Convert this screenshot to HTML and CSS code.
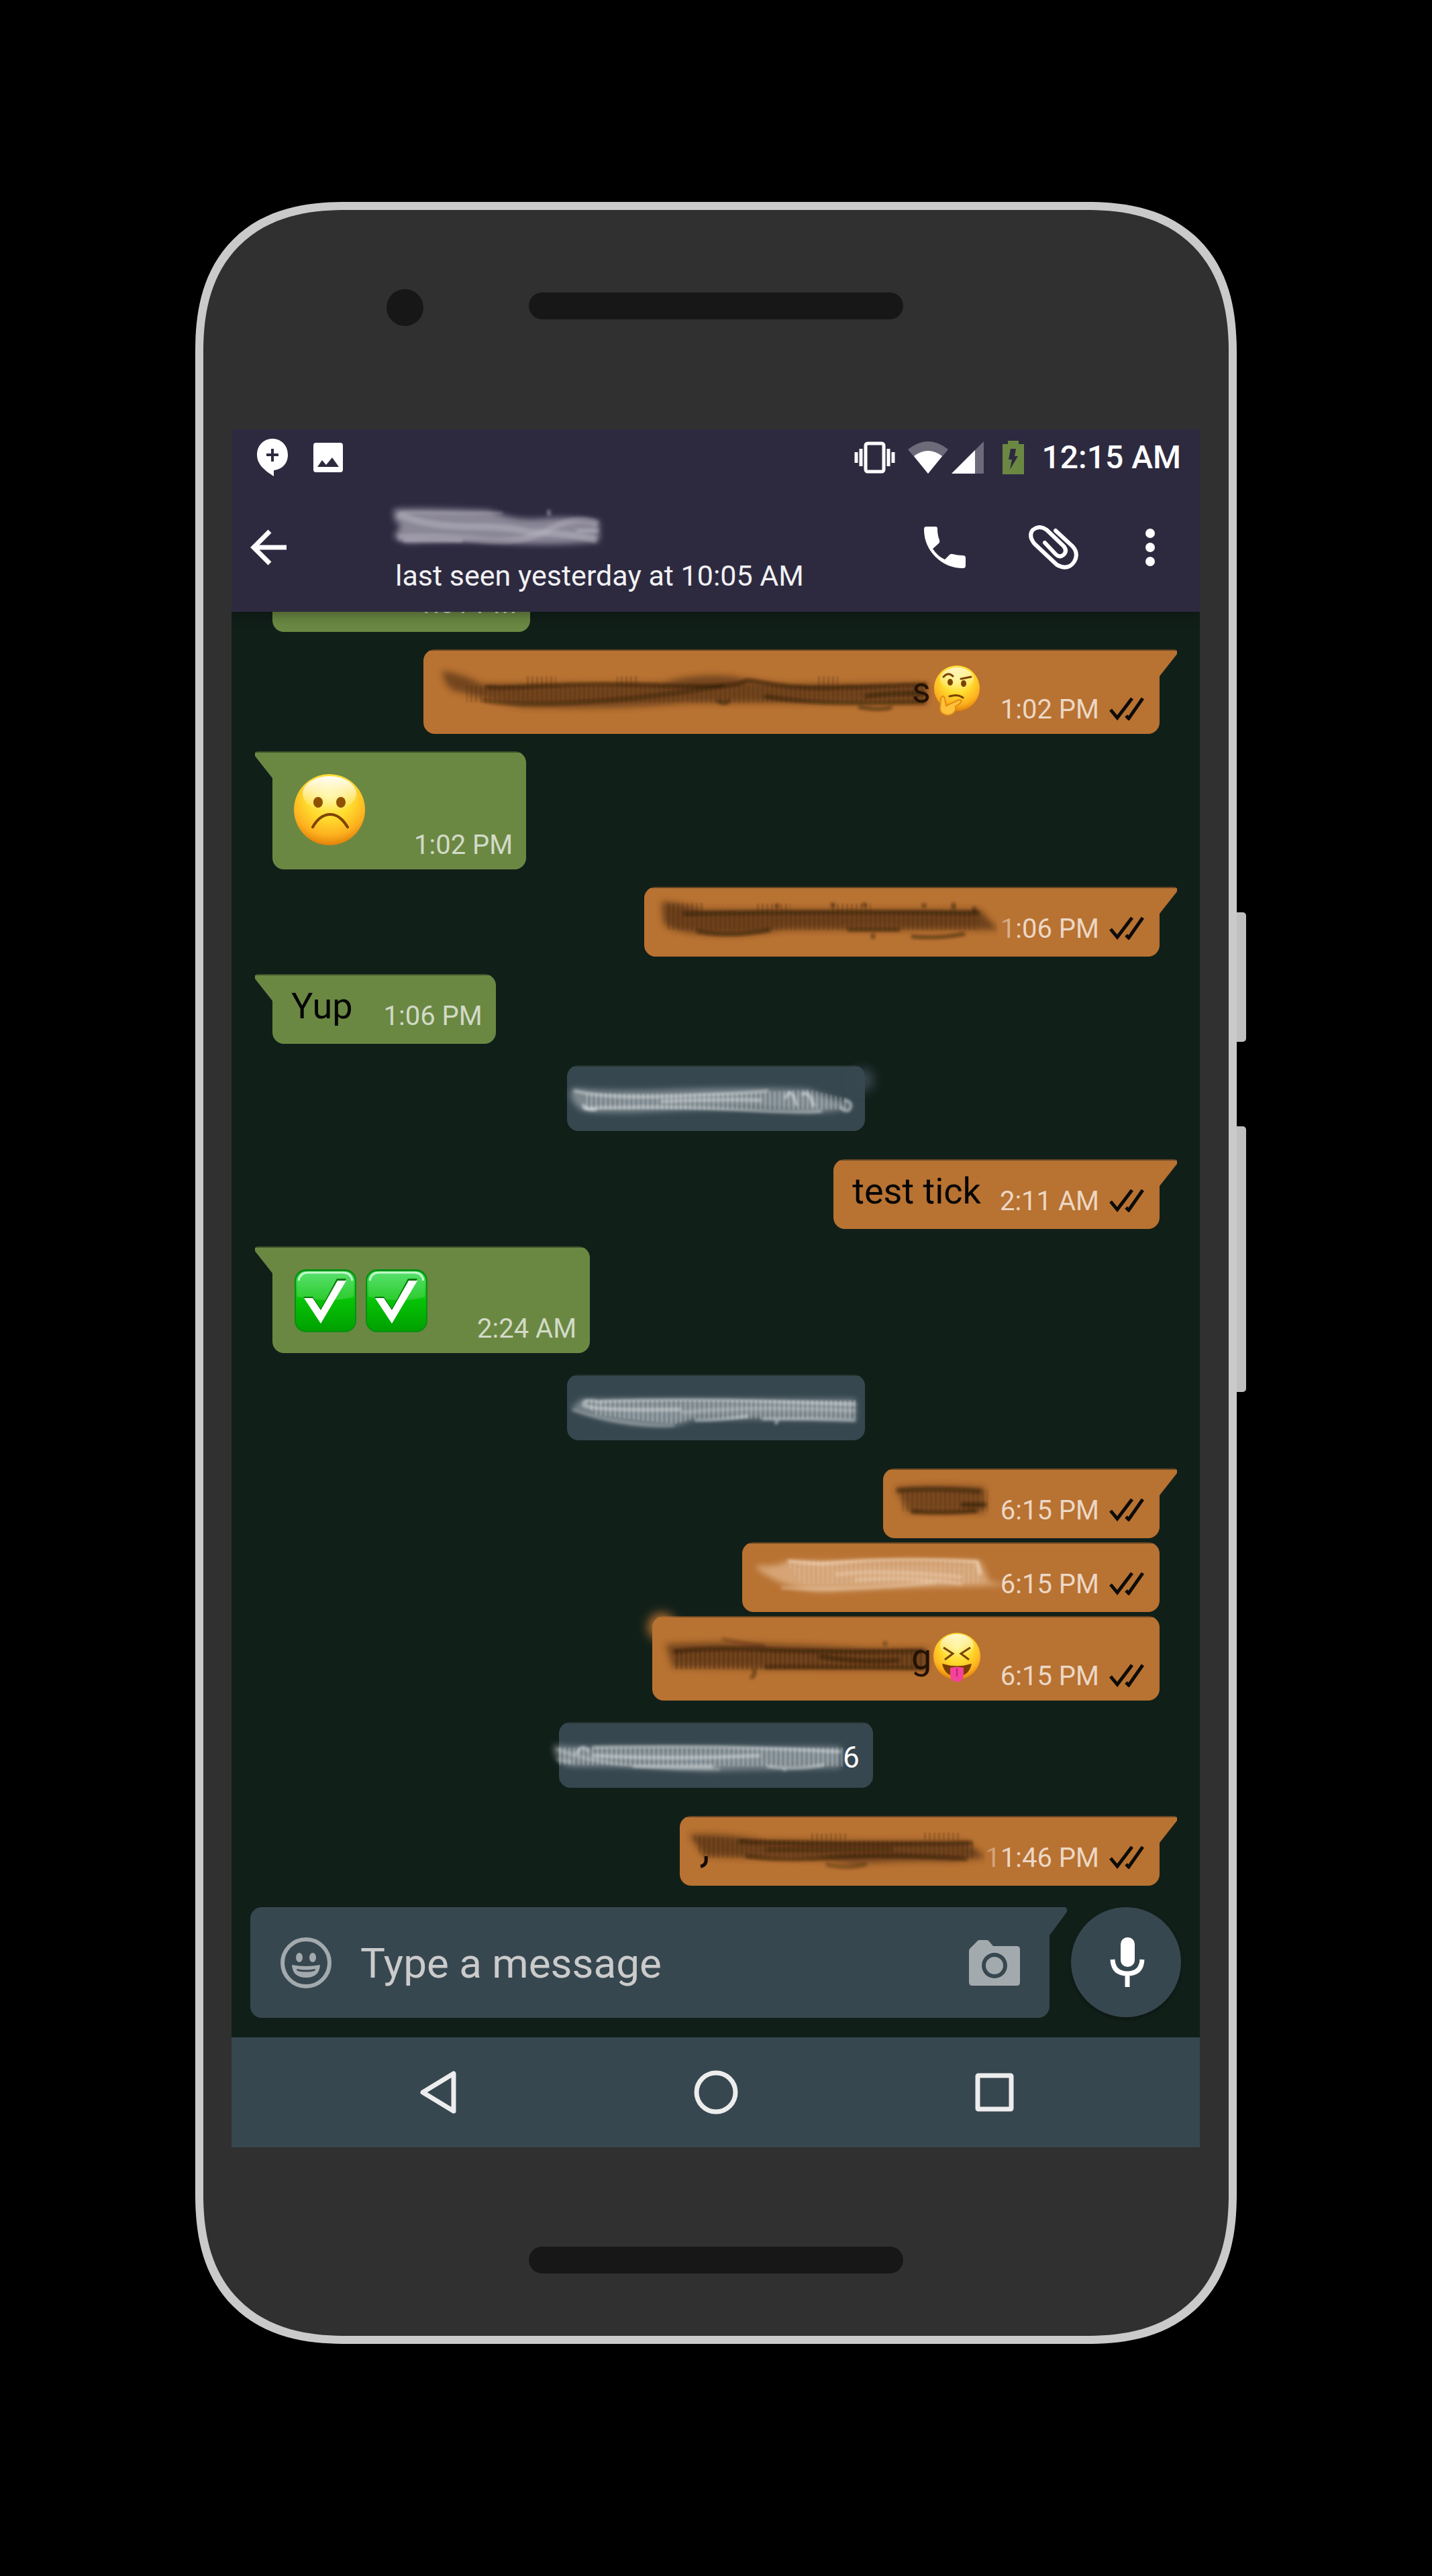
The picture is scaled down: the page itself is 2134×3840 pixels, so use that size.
FILE: index.html
```html
<!DOCTYPE html>
<html lang="en">
<head>
<meta charset="utf-8">
<meta name="viewport" content="width=device-width, initial-scale=1">
<title>Chat</title>
<link rel="stylesheet" href="styles.css">
</head>
<body>
<svg class="defs" aria-hidden="true">
  <defs>
    <filter id="soft" x="-20%" y="-60%" width="140%" height="220%"><feGaussianBlur stdDeviation="5"/></filter>
    <filter id="fine" x="-20%" y="-60%" width="140%" height="220%"><feGaussianBlur stdDeviation="2"/></filter>
    <filter id="glow" x="-100%" y="-100%" width="300%" height="300%"><feGaussianBlur stdDeviation="8"/></filter>
    <pattern id="comb-dark" width="7" height="80" patternUnits="userSpaceOnUse"><rect width="3" height="80" fill="#3b220c"/></pattern>
    <pattern id="comb-light" width="7" height="110" patternUnits="userSpaceOnUse"><rect width="3" height="110" fill="#e6eaec"/></pattern>
    <radialGradient id="face" cx=".5" cy=".3" r=".72">
      <stop offset="0" stop-color="#fff37a"/><stop offset=".45" stop-color="#ffdc2e"/><stop offset=".78" stop-color="#fdb01e"/><stop offset="1" stop-color="#dd7b06"/>
    </radialGradient>
    <linearGradient id="shine" x1="0" y1="0" x2="0" y2="1">
      <stop offset="0" stop-color="#fff" stop-opacity=".95"/><stop offset="1" stop-color="#fff" stop-opacity="0"/>
    </linearGradient>
    <linearGradient id="check-green" x1="0" y1="0" x2="0" y2="1">
      <stop offset="0" stop-color="#3ddc57"/><stop offset=".5" stop-color="#06c206"/><stop offset="1" stop-color="#00a000"/>
    </linearGradient>
    <symbol id="ticks" viewBox="0 0 52 34">
      <path d="M2 18 12 30 34 1M25 27 29 31 50 1" fill="none" stroke="#0c0b08" stroke-width="5"/>
    </symbol>
    <symbol id="check" viewBox="0 0 94 96">
      <rect x="1" y="1" width="92" height="94" rx="17" fill="#0a8f12"/>
      <rect x="3" y="4" width="88" height="89" rx="15" fill="url(#check-green)"/>
      <path d="M5 44V19Q6 5 20 5H74Q88 5 89 19V42Q60 52 5 42Z" fill="#fff" opacity=".15"/>
      <path d="M7 18Q9 6 21 6H73Q85 6 87 18" fill="none" stroke="#c4f7cb" stroke-width="3"/>
      <path d="M14 42H28L40 60 64 15H78L40 79Z" fill="#077a0c"/>
      <path d="M15 44H28L40 62 65 18H78L40 82Z" fill="#fff"/>
    </symbol>
  </defs>
</svg>

<main class="phone">
  <span class="side-key side-key--power"></span>
  <span class="side-key side-key--volume"></span>

  <div class="bezel bezel--top">
    <span class="camera"></span>
    <span class="speaker"></span>
  </div>

  <section class="screen">
    <header class="header">
      <div class="status">
        <div class="status__group status__group--left">
          <svg width="46" height="56" viewBox="0 0 46 56"><path fill="#fff" fill-rule="evenodd" d="M23 0C36 0 46 10 46 24C46 37 37 46 25 47V56C11 47 0 38 0 24C0 10 10 0 23 0ZM21 15V22H14V26H21V34H25V26H32V22H25V15Z"/></svg>
          <svg width="44" height="44" viewBox="0 0 44 44"><path fill="#fff" fill-rule="evenodd" d="M4 0H40Q44 0 44 4V40Q44 44 40 44H4Q0 44 0 40V4Q0 0 4 0ZM6 36H38L28 22 19 33 13 26Z"/></svg>
        </div>
        <div class="status__group">
          <svg width="61" height="48" viewBox="0 0 61 48"><rect x="17" y="3" width="27" height="42" rx="3" fill="none" stroke="#fff" stroke-width="5"/><path d="M3 16V32M10 11V37M51 11V37M58 16V32" stroke="#fff" stroke-width="5"/></svg>
          <svg class="wifi" width="60" height="48" viewBox="0 0 60 48"><path fill="#6d6a7a" d="M0 12Q30-12 60 12L30 48Z"/><path fill="#fff" d="M9 22Q30 6 51 22L30 48Z"/></svg>
          <svg class="signal" width="48" height="48" viewBox="0 0 48 48"><path fill="#6d6a7a" d="M48 0V48H0Z"/><path fill="#fff" d="M35 13V48H0Z"/></svg>
          <svg class="battery" width="32" height="50" viewBox="0 0 32 50"><path fill="#6b8843" d="M8 0H24V5H32V50H0V5H8Z"/><path fill="#2d2a40" d="M12 12H20L18 23H23L11 43 14 28H9Z"/></svg>
          <time class="clock">12:15 AM</time>
        </div>
      </div>
      <div class="appbar">
        <button class="icon-btn icon-btn--back" aria-label="Back"><svg width="54" height="54" viewBox="0 0 54 54"><path d="M29 3 5 27 29 51M5 27H54" fill="none" stroke="#fff" stroke-width="7"/></svg></button>
        <div class="contact">
          <svg class="contact__name" width="310" height="72" viewBox="0 0 310 72" aria-label="Contact name">
            <path filter="url(#soft)" opacity=".75" fill="#a9a6b4" d="M-2 8Q40 6 140 10Q180 26 220 22Q260 18 304 26V56Q230 64 160 58Q80 54 20 58Q-6 54 0 44Q14 32 -2 24Z"/>
            <g filter="url(#fine)" fill="none" stroke="#bdbac6">
              <path d="M4 16Q50 34 110 34T200 42Q260 44 300 54" stroke-width="10" opacity=".45"/>
              <path d="M4 50Q70 48 130 54T230 38T302 30" stroke-width="10" opacity=".4"/>
              <path d="M10 13Q80 14 160 14" stroke-width="4" opacity=".4"/>
              <path d="M229 9V18M270 40H303M12 55H100" stroke-width="5" opacity=".55"/>
            </g>
          </svg>
          <p class="contact__seen">last seen yesterday at 10:05 AM</p>
        </div>
        <button class="icon-btn" aria-label="Call"><svg width="62" height="62" viewBox="0 0 62 62"><path fill="#fff" d="M3 0H17Q20 0 20 3Q20 13 23 20Q24 23 22 25L13 33Q20 44 31 49L38 42Q40 40 43 41Q50 43 58 43Q62 43 62 47V58Q62 62 58 62Q34 62 17 45Q0 28 0 4Q0 0 3 0Z"/></svg></button>
        <button class="icon-btn" aria-label="Attach"><svg width="74" height="66" viewBox="0 0 74 66"><path fill="none" stroke="#fff" stroke-width="6" stroke-linecap="round" d="M40 8 65 31Q75 42 68 54Q59 68 42 59L9 28Q-1 16 6 7Q16-1 27 7L52 31Q58 38 52 44Q46 49 40 43L24 26"/></svg></button>
        <button class="icon-btn icon-btn--menu" aria-label="More"><svg width="14" height="56" viewBox="0 0 14 56" fill="#fff"><circle cx="7" cy="7" r="7"/><circle cx="7" cy="28" r="7"/><circle cx="7" cy="49" r="7"/></svg></button>
      </div>
    </header>

    <div class="chat">
      <article class="bubble bubble--in bubble--first"><time class="time">1:01 PM</time></article>

      <article class="bubble bubble--out bubble--tail bubble--emoji">
        <svg class="smudge" width="804" height="74" viewBox="0 0 804 74">
          <path filter="url(#soft)" opacity=".55" fill="#3e240c" d="M0 8Q30 12 60 28L330 26Q370 12 430 16Q480 26 520 28L722 27V56L360 56Q270 66 120 62Q60 50 30 40Q4 40 0 8Z"/>
          <path class="hatch" fill="url(#comb-dark)" opacity=".25" d="M36 30H720V55H36ZM126 16H170V30H126ZM260 16H290V30H260ZM560 16H590V30H560Z"/>
          <g filter="url(#fine)" fill="none" stroke="#231203" stroke-width="5">
            <path opacity=".6" d="M65 32C120 36 160 24 330 30S420 14 480 26S600 32 722 28"/>
            <path opacity=".45" d="M60 52C140 66 300 50 420 30"/>
            <path opacity=".55" d="M480 46C560 60 640 55 720 55M630 46Q680 40 720 42M410 52Q420 60 428 52M620 62Q655 68 670 62"/>
          </g>
          <text class="letter" x="700" y="55">s</text>
          <circle cx="767" cy="34" r="34" fill="url(#face)"/><ellipse cx="767" cy="20" rx="25" ry="17" fill="url(#shine)" opacity=".7"/>
          <ellipse cx="757" cy="25" rx="4" ry="5" fill="#7a4300"/><ellipse cx="777" cy="27" rx="4" ry="5" fill="#7a4300"/>
          <path d="M747 17Q754 9 761 16M773 20 788 17M756 46Q768 42 776 48" fill="none" stroke="#7a4300" stroke-width="3" stroke-linecap="round"/>
          <path d="M743 49Q747 42 749 50L751 60 770 51Q777 52 771 57L765 61V66Q762 74 752 74Q742 72 742 64Z" fill="#ffc13a" stroke="#e08c14" stroke-width="2"/>
        </svg>
        <span class="meta"><time class="time">1:02 PM</time><svg class="ticks"><use href="#ticks"/></svg></span>
      </article>

      <article class="bubble bubble--in bubble--tail bubble--sad">
        <svg class="big" width="106" height="108" viewBox="0 0 106 108" aria-label="Frowning face">
          <circle cx="53" cy="54" r="53" fill="url(#face)"/><ellipse cx="53" cy="30" rx="40" ry="26" fill="url(#shine)"/>
          <ellipse cx="36" cy="43" rx="7" ry="8" fill="#8f5200"/><ellipse cx="70" cy="43" rx="7" ry="8" fill="#8f5200"/>
          <path d="M28 80Q38 62 53 61T80 80" fill="none" stroke="#7d4200" stroke-width="4" stroke-linecap="round"/>
        </svg>
        <time class="time">1:02 PM</time>
      </article>

      <article class="bubble bubble--out bubble--tail">
        <svg class="smudge" width="475" height="66" viewBox="0 0 475 66">
          <path filter="url(#soft)" opacity=".6" fill="#3e240c" d="M-2 8Q30 10 60 20H472L500 50H300L180 50Q120 60 80 58Q0 54 0 36Z"/>
          <path class="hatch" fill="url(#comb-dark)" opacity=".25" d="M6 10H60V22H470V50H6ZM140 11H190V22H140ZM250 11H310V22H250Z"/>
          <g filter="url(#fine)" fill="none" stroke="#231203" stroke-width="5">
            <path opacity=".55" d="M30 26Q250 22 472 25M275 50H353M50 52Q100 62 160 50M370 60Q410 64 450 56"/>
            <path opacity=".6" d="M170 12V17M253 10V16M300 10V16M389 11V17M433 10V20M464 16V24M313 56V63"/>
          </g>
        </svg>
        <span class="meta"><time class="time">1:06 PM</time><svg class="ticks"><use href="#ticks"/></svg></span>
        <span class="smear"></span>
      </article>

      <article class="bubble bubble--in bubble--tail"><p class="text">Yup</p><time class="time">1:06 PM</time></article>

      <div class="date">
        <svg class="smudge" width="444" height="98" viewBox="0 0 444 98">
          <circle cx="440" cy="22" r="17" fill="#37474f" filter="url(#glow)"/>
          <path filter="url(#soft)" opacity=".45" fill="#cdd4d8" d="M8 34Q60 40 160 36T360 36L424 60Q400 74 330 68T150 68T20 66Q0 50 8 34Z"/>
          <path class="hatch" fill="url(#comb-light)" opacity=".26" d="M24 42H250L360 36 420 50V66H24Z"/>
          <g filter="url(#fine)" fill="none" stroke="#e9edef" stroke-width="4">
            <path opacity=".55" d="M10 38Q60 50 160 46T300 38M24 64Q140 60 250 66T380 68M140 54Q230 50 290 52"/>
            <path opacity=".65" d="M325 50Q334 28 342 60M350 44Q360 34 368 62M414 52Q428 56 420 67Q414 70 408 62M24 58Q26 68 44 66"/>
          </g>
        </svg>
      </div>

      <article class="bubble bubble--out bubble--tail">
        <p class="text">test tick</p>
        <span class="meta"><time class="time">2:11 AM</time><svg class="ticks"><use href="#ticks"/></svg></span>
      </article>

      <article class="bubble bubble--in bubble--tail bubble--checks">
        <span class="big big--pair" role="img" aria-label="Two check marks"><svg width="94" height="96"><use href="#check"/></svg><svg width="94" height="96"><use href="#check"/></svg></span>
        <time class="time">2:24 AM</time>
      </article>

      <div class="date">
        <svg class="smudge" width="444" height="98" viewBox="0 0 444 98">
          <path filter="url(#soft)" opacity=".45" fill="#cdd4d8" d="M22 37H430V68L300 66 190 66Q170 78 130 76Q60 74 6 50Z"/>
          <path class="hatch" fill="url(#comb-light)" opacity=".28" d="M26 38H430V66H190L160 74 40 60Z"/>
          <g filter="url(#fine)" fill="none" stroke="#e9edef" stroke-width="4">
            <path opacity=".6" d="M52 42Q20 34 26 46Q40 54 170 52M50 40Q170 36 300 40T430 44M190 68Q230 68 270 62M290 66H365L430 68M314 66 311 74"/>
            <path opacity=".35" d="M8 52Q80 78 160 76M170 56Q280 46 430 54"/>
          </g>
        </svg>
      </div>

      <article class="bubble bubble--out bubble--tail">
        <svg class="smudge" width="119" height="66" viewBox="0 0 119 66">
          <path filter="url(#soft)" opacity=".5" fill="#3e240c" d="M-10 14Q60 8 124 14V52H10L-2 30Z"/>
          <path class="hatch" fill="url(#comb-dark)" opacity=".2" d="M-2 18H128V50H-2Z"/>
          <g filter="url(#fine)" fill="none" stroke="#231203" stroke-width="6"><path opacity=".5" d="M-8 19Q40 14 118 20"/><path opacity=".6" d="M14 50Q60 54 112 49M88 40H126"/></g>
        </svg>
        <span class="meta"><time class="time">6:15 PM</time><svg class="ticks"><use href="#ticks"/></svg></span>
      </article>

      <article class="bubble bubble--out bubble--next">
        <svg class="smudge" width="329" height="66" viewBox="0 0 329 66">
          <path filter="url(#soft)" opacity=".65" fill="#e6c09a" d="M-6 20Q20 24 40 14H328L340 44 372 50 300 52Q180 54 100 60Q40 60 -6 26Z"/>
          <path class="hatch" fill="url(#comb-light)" opacity=".15" d="M36 14H328V48H60Z"/>
          <g filter="url(#fine)" fill="none" stroke="#f6e2cd" stroke-width="5"><path opacity=".6" d="M40 14Q60 16 90 18Q200 8 322 15L327 34"/><path opacity=".35" d="M110 34Q180 26 300 38M140 42Q220 36 300 48M30 54Q120 60 260 46"/></g>
        </svg>
        <span class="meta"><time class="time">6:15 PM</time><svg class="ticks"><use href="#ticks"/></svg></span>
      </article>

      <article class="bubble bubble--out bubble--next bubble--emoji">
        <svg class="smudge" width="463" height="74" viewBox="0 0 463 74">
          <circle cx="-14" cy="-8" r="20" fill="#b87232" filter="url(#glow)"/>
          <path filter="url(#soft)" opacity=".55" fill="#3e240c" d="M-8 18Q60 14 100 16L220 20 300 24H382V55H140L2 53Z"/>
          <path class="hatch" fill="url(#comb-dark)" opacity=".38" d="M4 26H382V55H4Z"/>
          <g filter="url(#fine)" fill="none" stroke="#231203" stroke-width="5">
            <path opacity=".6" d="M4 29Q60 22 140 26T376 28M140 52Q260 52 380 54M220 36Q280 46 340 42"/>
            <path opacity=".5" d="M124 54Q126 68 118 67M319 14V20"/>
            <path opacity=".25" d="M76 10Q110 18 140 20"/>
          </g>
          <text class="letter" x="358" y="55">g</text>
          <circle cx="426" cy="36" r="35" fill="url(#face)"/><ellipse cx="426" cy="20" rx="25" ry="17" fill="url(#shine)" opacity=".8"/>
          <path d="M406 23 420 32 408 41M446 23 432 32 444 41" fill="none" stroke="#7a4300" stroke-width="3"/>
          <path d="M404 47Q426 54 448 47Q444 66 426 66T404 47Z" fill="#7a3c00"/><path d="M416 53Q426 51 436 53V65Q435 74 426 74T416 65Z" fill="#f2449a"/><path d="M426 54V66" stroke="#c91e74" stroke-width="2"/>
        </svg>
        <span class="meta"><time class="time">6:15 PM</time><svg class="ticks"><use href="#ticks"/></svg></span>
      </article>

      <div class="date">
        <svg class="smudge" width="468" height="98" viewBox="0 0 468 98">
          <path filter="url(#soft)" opacity=".45" fill="#cdd4d8" d="M-8 34Q20 38 60 37H420V68Q330 70 220 73Q120 66 20 66Q-8 62 -8 34Z"/>
          <path class="hatch" fill="url(#comb-light)" opacity=".28" d="M0 38H424V66H230L0 64Z"/>
          <g filter="url(#fine)" fill="none" stroke="#e9edef" stroke-width="4">
            <path opacity=".6" d="M26 48Q34 30 44 44M50 38Q180 36 260 38T420 44M50 50Q160 56 300 50M110 66H230M310 66Q350 72 395 64M336 66V73"/>
            <path opacity=".35" d="M-4 40Q60 66 180 70H240M-4 56 20 60"/>
          </g>
          <text class="date__digit" x="423" y="68">6</text>
        </svg>
      </div>

      <article class="bubble bubble--out bubble--tail">
        <svg class="smudge" width="399" height="66" viewBox="0 0 399 66">
          <path filter="url(#soft)" opacity=".58" fill="#3e240c" d="M-14 14Q30 10 100 22L400 24 428 48 380 54Q300 52 230 58L180 50 60 48 8 46Z"/>
          <path class="hatch" fill="url(#comb-dark)" opacity=".25" d="M-8 16 60 20 410 26V48H4ZM168 12H220V22H168ZM332 11H390V22H332Z"/>
          <g filter="url(#fine)" fill="none" stroke="#231203" stroke-width="5"><path opacity=".6" d="M60 24Q200 30 408 26M70 46Q130 54 200 48T400 50"/><path opacity=".4" d="M100 36H290M190 58Q220 66 250 58"/></g>
          <path d="M11 46Q13 60 3 61" fill="none" stroke="#120a03" stroke-width="5"/>
        </svg>
        <span class="meta"><time class="time">11:46 PM</time><svg class="ticks"><use href="#ticks"/></svg></span>
        <span class="smear smear--wide"></span>
      </article>
    </div>

    <form class="composer">
      <div class="entry">
        <button type="button" class="entry__btn" aria-label="Emoji"><svg width="76" height="76" viewBox="0 0 76 76"><circle cx="38" cy="38" r="35" fill="none" stroke="#a3aaad" stroke-width="6"/><ellipse cx="28" cy="30" rx="5" ry="7" fill="#a3aaad"/><ellipse cx="48" cy="30" rx="5" ry="7" fill="#a3aaad"/><path fill="#a3aaad" fill-rule="evenodd" d="M17 41Q38 45 59 41Q58 60 38 60T17 41ZM24 47Q38 50 52 47L51 50Q38 53 25 50Z"/></svg></button>
        <input class="entry__input" type="text" placeholder="Type a message" aria-label="Type a message">
        <button type="button" class="entry__btn" aria-label="Camera"><svg width="76" height="68" viewBox="0 0 76 68"><path fill="#a3aaad" fill-rule="evenodd" d="M12 2Q13 0 16 0H26Q29 0 30 2L36 9H71Q76 9 76 14V63Q76 68 71 68H5Q0 68 0 63V16Q0 14 2 12ZM38 19A19 19 0 1 0 38 57A19 19 0 1 0 38 19ZM38 25A13 13 0 1 1 38 51A13 13 0 1 1 38 25Z"/></svg></button>
      </div>
      <button type="button" class="mic" aria-label="Record voice message"><svg width="52" height="74" viewBox="0 0 52 74"><rect x="16" y="0" width="21" height="44" rx="10" fill="#fff"/><path d="M4 33Q5 54 26 54T48 33M26 54V74" fill="none" stroke="#fff" stroke-width="7"/></svg></button>
    </form>

    <nav class="nav">
      <button class="nav__btn" aria-label="Back"><svg width="56" height="66" viewBox="0 0 56 66"><path d="M51 5V61L5 33Z" fill="none" stroke="#ededee" stroke-width="7" stroke-linejoin="round"/></svg></button>
      <button class="nav__btn" aria-label="Home"><svg width="66" height="66" viewBox="0 0 66 66"><circle cx="33" cy="33" r="29" fill="none" stroke="#ededee" stroke-width="7"/></svg></button>
      <button class="nav__btn" aria-label="Recent apps"><svg width="58" height="58" viewBox="0 0 58 58"><rect x="4" y="4" width="50" height="50" rx="1" fill="none" stroke="#ededee" stroke-width="7"/></svg></button>
    </nav>
  </section>

  <div class="bezel bezel--bottom"><span class="speaker"></span></div>
</main>
</body>
</html>
```
FILE: styles.css
```css
* { box-sizing: border-box; }

body {
  margin: 0;
  padding: 301px 291px 347px;
  background: #000;
  color: #fff;
  font-family: Roboto, "Liberation Sans", sans-serif;
}

button { margin: 0; padding: 0; border: 0; background: none; }
svg { display: block; flex: none; }
p { margin: 0; }
.defs { position: absolute; width: 0; height: 0; }

/* Handset */
.phone {
  position: relative;
  padding: 0 43px 0 42px;
  border: 12px solid #cacaca;
  border-radius: 190px;
  background: #303030;
}
@supports (corner-shape: squircle) {
  .phone { border-radius: 225px; corner-shape: superellipse(1.27); }
}
.side-key {
  position: absolute;
  left: calc(100% + 12px);
  width: 14px;
  border-radius: 0 5px 5px 0;
  background: #c0c0c0;
}
.side-key--power { top: 1047px; height: 193px; }
.side-key--volume { top: 1366px; height: 396px; }

.bezel { display: grid; grid-template-columns: 1fr 558px 1fr; align-items: center; }
.bezel--top { height: 327px; padding-bottom: 42px; }
.bezel--bottom { height: 281px; padding-top: 54px; }
.speaker { grid-column: 2; height: 40px; border-radius: 20px; background: #171717; }
.camera { justify-self: end; width: 55px; height: 55px; margin: 6px 157px 0 0; border-radius: 50%; background: #171717; }

.screen { background: #111f19; }

/* Header */
.header { position: relative; z-index: 1; background: #2d2a40; box-shadow: 0 2px 20px rgba(0, 0, 0, .4); clip-path: inset(0 0 -24px 0); }
.status { display: flex; justify-content: space-between; height: 80px; padding: 4px 28px 0 38px; }
.status__group { display: flex; align-items: center; }
.status__group--left { gap: 38px; }
.wifi { margin-left: 19px; }
.signal { margin-left: 5px; }
.battery { margin-left: 28px; }
.clock { margin-left: 26px; font-size: 48px; font-weight: 500; line-height: 58px; }

.appbar { display: flex; align-items: center; height: 192px; padding-right: 12px; }
.icon-btn { display: flex; justify-content: center; align-items: center; width: 162px; height: 150px; }
.icon-btn--back { justify-content: flex-start; width: 244px; padding-left: 28px; }
.icon-btn--menu { width: 125px; }
.contact { flex: 1; padding-top: 3px; }
.contact__name { overflow: visible; }
.contact__seen { margin-top: 8px; color: #f1f1f3; font-size: 43px; line-height: 54px; white-space: nowrap; }

/* Conversation */
.chat {
  display: flex;
  flex-direction: column;
  align-items: flex-start;
  overflow: hidden;
  padding: 0 60px 32px 61px;
}
.bubble {
  position: relative;
  display: flex;
  justify-content: space-between;
  min-height: 104px;
  margin-top: 26px;
  border-radius: 17px;
}
.bubble--in {
  gap: 46px;
  padding: 14px 20px 16px 28px;
  background: linear-gradient(#3f542b 2px, #6b8843 2px);
}
.bubble--out {
  align-self: flex-end;
  gap: 28px;
  padding: 14px 23px 16px 28px;
  background: linear-gradient(#674521 2px, #b87232 2px);
}
.bubble--in.bubble--tail { border-top-left-radius: 0; }
.bubble--out.bubble--tail { border-top-right-radius: 0; }
.bubble--tail::before {
  content: "";
  position: absolute;
  top: 0;
  width: 28px;
  height: 40px;
}
.bubble--in::before {
  right: calc(100% - 1px);
  background: linear-gradient(#3f542b 2px, #6b8843 2px);
  clip-path: polygon(4px 0, 100% 0, 100% 40px, 27px 40px, 1px 7px, 1px 2px);
}
.bubble--out::before {
  left: calc(100% - 1px);
  background: linear-gradient(#674521 2px, #b87232 2px);
  clip-path: polygon(24px 0, 0 0, 0 40px, 1px 40px, 27px 7px, 27px 2px);
}
.bubble--first { justify-content: flex-end; width: 384px; margin-top: -74px; }
.bubble--next { margin-top: 6px; }
.bubble--emoji { min-height: 126px; padding-top: 24px; padding-bottom: 11px; }
.bubble--sad,
.bubble--checks { gap: 73px; padding: 33px 20px 11px 32px; }
.bubble--sad { min-height: 176px; }
.bubble--checks { min-height: 159px; }
.big--pair { display: flex; gap: 12px; }

.text { color: #050505; font-size: 54px; line-height: 68px; white-space: nowrap; }
.letter { fill: #231203; font-size: 54px; }
.meta { display: flex; align-items: flex-end; gap: 15px; }
.time { align-self: flex-end; font-size: 40px; line-height: 50px; white-space: nowrap; }
.bubble--in .time { color: #d2dac7; }
.bubble--out .time { color: #ecd7c4; }
.ticks { width: 52px; height: 34px; margin-bottom: 9px; }
.smudge { overflow: visible; }
.hatch { filter: blur(1px); }

/* Fades the first digit of a timestamp where a smudge runs over it */
.smear { position: absolute; right: 208px; bottom: 20px; width: 34px; height: 50px; background: linear-gradient(90deg, rgba(184, 114, 50, .8), rgba(184, 114, 50, 0)); }
.smear--wide { right: 226px; }

.date {
  align-self: center;
  height: 98px;
  margin: 32px 0 16px;
  border-radius: 17px;
  background: linear-gradient(#24332f 2px, #37474f 2px);
}
.date__digit { fill: #fff; font-size: 44px; }

/* Composer */
.composer { display: flex; gap: 32px; padding: 0 28px 29px; }
.entry {
  position: relative;
  flex: 1;
  display: flex;
  align-items: center;
  height: 165px;
  padding: 0 44px 0 45px;
  border-radius: 17px 0 17px 17px;
  background: #37474f;
}
.entry::after {
  content: "";
  position: absolute;
  top: 0;
  left: calc(100% - 1px);
  width: 28px;
  height: 42px;
  background: #37474f;
  clip-path: polygon(24px 0, 0 0, 0 42px, 1px 42px, 27px 7px, 27px 2px);
}
.entry__input {
  flex: 1;
  min-width: 0;
  padding: 3px 0 0 43px;
  border: 0;
  background: none;
  color: #fff;
  font: 62px/76px Roboto, "Liberation Sans", sans-serif;
}
.entry__input::placeholder { color: #cbcbcb; opacity: 1; }
.mic {
  display: flex;
  justify-content: center;
  align-items: center;
  width: 164px;
  height: 164px;
  padding-left: 4px;
  border-radius: 50%;
  background: #37474f;
  box-shadow: 0 3px 5px rgba(0, 0, 0, .3);
}

.nav { display: grid; grid-template-columns: repeat(3, 1fr); height: 164px; padding: 0 99px 0 101px; background: #37474f; }
.nav__btn { display: flex; justify-content: center; align-items: center; }
```
